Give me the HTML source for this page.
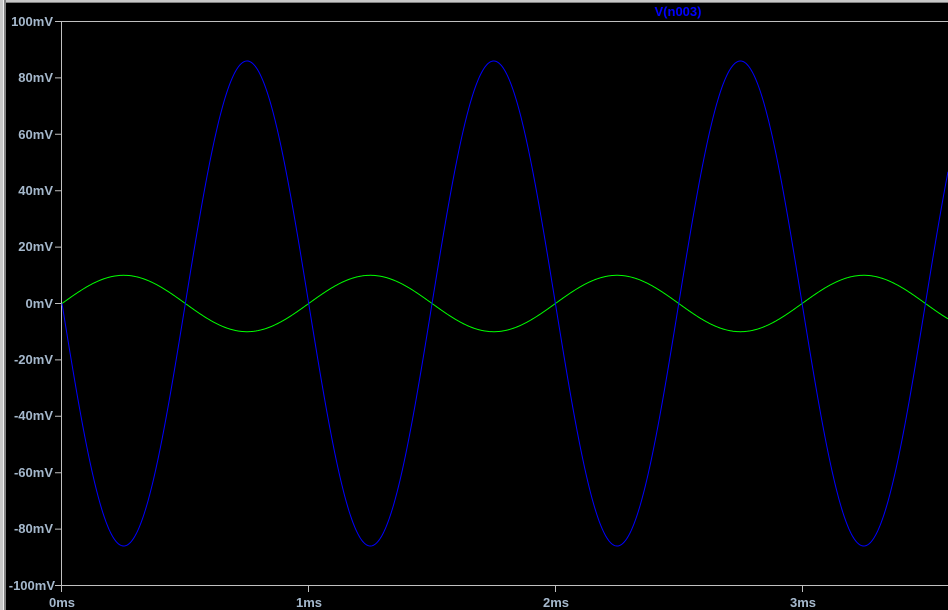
<!DOCTYPE html>
<html><head><meta charset="utf-8"><style>
html,body{margin:0;padding:0;background:#000;width:948px;height:610px;overflow:hidden}
svg{display:block}
text{font-family:"Liberation Sans",Arial,sans-serif;font-weight:bold;font-size:13px;fill:#a5b8cc}
</style></head><body>
<svg id="s" width="948" height="610" xmlns="http://www.w3.org/2000/svg">
<rect x="0" y="0" width="948" height="610" fill="#000"/>
<rect x="0" y="0" width="948" height="2" fill="#c8c8c8"/>
<rect x="0" y="2" width="948" height="1" fill="#808080"/>
<rect x="0" y="0" width="3" height="610" fill="#c8c8c8"/>
<rect x="3" y="0" width="1" height="610" fill="#f0f0f0"/>
<rect x="4" y="0" width="2" height="610" fill="#808080"/>
<g stroke="#c0c0c0" stroke-width="1" fill="none">
<path d="M61.5 21.5H948M61.5 21.5V585.5M61.5 585.5H948"/>
<path id="yt" d=""/>
<path d="M61.5 585V592M308.5 585V592M555.5 585V592M802.5 585V592"/>
</g>
<g text-anchor="end">
<text x="53" y="26">100mV</text>
<text x="53" y="82">80mV</text>
<text x="53" y="139">60mV</text>
<text x="53" y="195">40mV</text>
<text x="53" y="251">20mV</text>
<text x="53" y="308">0mV</text>
<text x="53" y="364">-20mV</text>
<text x="53" y="420">-40mV</text>
<text x="53" y="477">-60mV</text>
<text x="53" y="533">-80mV</text>
<text x="55" y="590">-100mV</text>
</g>
<g text-anchor="middle">
<text x="62" y="607">0ms</text>
<text x="309" y="607">1ms</text>
<text x="556" y="607">2ms</text>
<text x="803" y="607">3ms</text>
</g>
<text x="678" y="16" text-anchor="middle" style="fill:#0000ff">V(n003)</text>
<path id="g" fill="none" stroke="#00ff00" stroke-width="1" d=""/>
<path id="b" fill="none" stroke="#0000ff" stroke-width="1" d=""/>
</svg>
<script>
var x0=62,pp=246.7,y0=303.5,k=2.82;
var g="",b="",t="";
for(var x=62;x<=948;x+=1){var ph=2*Math.PI*(x-x0)/pp;
g+=(x==62?"M":"L")+x+" "+(y0-10*k*Math.sin(ph)).toFixed(2);
b+=(x==62?"M":"L")+x+" "+(y0+86*k*Math.sin(ph)).toFixed(2);}
for(var i=0;i<=10;i++){var y=21.5+i*56.4;t+="M55 "+y.toFixed(1)+"H61.5";}
document.getElementById("g").setAttribute("d",g);
document.getElementById("b").setAttribute("d",b);
document.getElementById("yt").setAttribute("d",t);
</script>
</body></html>
